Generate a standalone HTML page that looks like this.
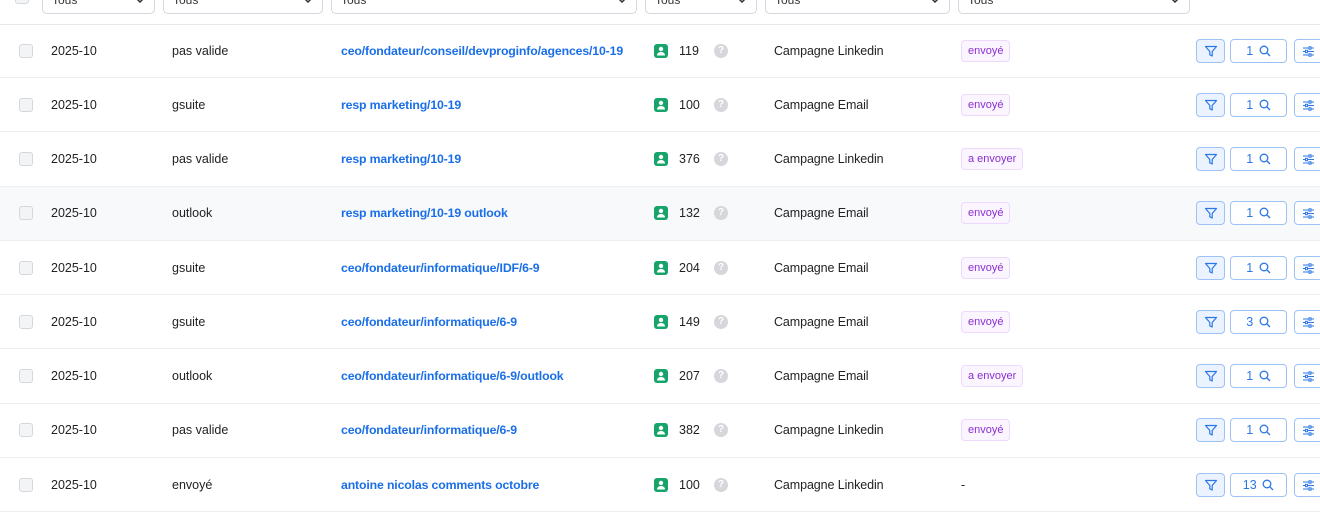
<!DOCTYPE html>
<html><head><meta charset="utf-8"><style>
*{box-sizing:border-box;margin:0;padding:0}
body{width:1320px;height:526px;overflow:hidden;background:#fff;font-family:"Liberation Sans",Arial,sans-serif;font-size:12.5px;color:#222;position:relative}
.sel{position:absolute;top:-10px;height:24px;border:1px solid #d5d8de;border-radius:5px;background:#fff}
.sel span{position:absolute;left:9px;top:2px;font-size:12px;color:#333}
.sel svg{position:absolute;right:9px;top:6px}
.hl{position:absolute;left:0;right:0;top:24px;height:1px;background:#e6e8ec}
.row{position:absolute;left:0;width:1320px;height:54px;border-bottom:1px solid #eceef1}
.row.g{background:#f8f9fb}
.row>*{position:absolute;top:50%;transform:translateY(-50%)}
.cb{left:19px;width:14px;height:14px;border:1px solid #d4d7dc;border-radius:3px;background:#f3f4f6}
.d{left:51px}.t{left:172px}
.n{left:341px;color:#1a6fe8;font-weight:bold;font-size:12.3px;letter-spacing:-0.15px}
.ic{left:654px;width:14px;height:14px;border-radius:3px;background:#16a46a}
.num{left:679px}
.q{left:714px;width:14px;height:14px;border-radius:50%;background:#d5d7db;color:#fff;font-size:10px;font-weight:bold;text-align:center;line-height:14px}
.c{left:774px;letter-spacing:-0.1px}
.b{left:961px;height:22px;padding:0 6px;border:1px solid #ecd9fb;background:#fbf5ff;border-radius:4px;color:#8a2fd1;font-size:11px;line-height:20px}
.dash{left:961px}
.bf{left:1196px;width:29px;height:24px;border:1px solid #9dc3f5;background:#eaf3ff;border-radius:4px}
.bc{left:1230px;width:57px;height:24px;border:1px solid #9dc3f5;background:#fff;border-radius:4px;color:#2c77e6;font-size:12.5px;text-align:center;line-height:22px}
.bs{left:1294px;width:30px;height:24px;border:1px solid #9dc3f5;background:#fff;border-radius:4px}
.bf svg,.bs svg{position:absolute;left:7px;top:5px}
.bc svg{vertical-align:-2px;margin-left:2px}
</style></head><body>
<div style="position:absolute;left:15px;top:-10px;width:14px;height:14px;border:1px solid #d4d7dc;border-radius:3px;background:#f3f4f6"></div>
<div class="sel" style="left:42px;width:113px"><span>Tous</span><svg width="10" height="6" viewBox="0 0 10 6"><path d="M1 1l4 4 4-4" fill="none" stroke="#333" stroke-width="1.5"/></svg></div>
<div class="sel" style="left:163px;width:160px"><span>Tous</span><svg width="10" height="6" viewBox="0 0 10 6"><path d="M1 1l4 4 4-4" fill="none" stroke="#333" stroke-width="1.5"/></svg></div>
<div class="sel" style="left:331px;width:306px"><span>Tous</span><svg width="10" height="6" viewBox="0 0 10 6"><path d="M1 1l4 4 4-4" fill="none" stroke="#333" stroke-width="1.5"/></svg></div>
<div class="sel" style="left:645px;width:112px"><span>Tous</span><svg width="10" height="6" viewBox="0 0 10 6"><path d="M1 1l4 4 4-4" fill="none" stroke="#333" stroke-width="1.5"/></svg></div>
<div class="sel" style="left:765px;width:185px"><span>Tous</span><svg width="10" height="6" viewBox="0 0 10 6"><path d="M1 1l4 4 4-4" fill="none" stroke="#333" stroke-width="1.5"/></svg></div>
<div class="sel" style="left:958px;width:232px"><span>Tous</span><svg width="10" height="6" viewBox="0 0 10 6"><path d="M1 1l4 4 4-4" fill="none" stroke="#333" stroke-width="1.5"/></svg></div>
<div class="hl"></div>
<div id="rows"></div>
<script>
var D=[["pas valide","ceo/fondateur/conseil/devproginfo/agences/10-19","119","Campagne Linkedin","envoyé","1"],
["gsuite","resp marketing/10-19","100","Campagne Email","envoyé","1"],
["pas valide","resp marketing/10-19","376","Campagne Linkedin","a envoyer","1"],
["outlook","resp marketing/10-19 outlook","132","Campagne Email","envoyé","1"],
["gsuite","ceo/fondateur/informatique/IDF/6-9","204","Campagne Email","envoyé","1"],
["gsuite","ceo/fondateur/informatique/6-9","149","Campagne Email","envoyé","3"],
["outlook","ceo/fondateur/informatique/6-9/outlook","207","Campagne Email","a envoyer","1"],
["pas valide","ceo/fondateur/informatique/6-9","382","Campagne Linkedin","envoyé","1"],
["envoyé","antoine nicolas comments octobre","100","Campagne Linkedin","","13"]];
var h="";
var person='<svg width="14" height="14" viewBox="0 0 14 14" style="position:absolute;left:0;top:0"><circle cx="7" cy="5" r="2.2" fill="#fff"/><path d="M3 11.5c0-2.2 1.8-3.5 4-3.5s4 1.3 4 3.5z" fill="#fff"/></svg>';
D.forEach(function(r,i){
var top=24+i*54.25;
h+='<div class="row'+(i==3?' g':'')+'" style="top:'+top+'px"><div class="cb"></div><div class="d">2025-10</div><div class="t">'+r[0]+'</div><div class="n">'+r[1]+'</div><div class="ic">'+person+'</div><div class="num">'+r[2]+'</div><div class="q">?</div><div class="c">'+r[3]+'</div>'+(r[4]?'<div class="b">'+r[4]+'</div>':'<div class="dash">-</div>')+
'<div class="bf"><svg width="14" height="13" viewBox="0 0 14 13"><path d="M1.5 1.5h11l-4.3 5v4.5l-2.4-1.2V6.5z" fill="none" stroke="#2c77e6" stroke-width="1.2" stroke-linejoin="round"/></svg></div>'+
'<div class="bc">'+r[5]+' <svg width="12" height="12" viewBox="0 0 12 12"><circle cx="5" cy="5" r="3.8" fill="none" stroke="#2c77e6" stroke-width="1.3"/><path d="M8 8l3 3" stroke="#2c77e6" stroke-width="1.3"/></svg></div>'+
'<div class="bs"><svg width="13" height="13" viewBox="0 0 13 13"><path d="M1 3h11M1 6.5h11M1 10h11" stroke="#2c77e6" stroke-width="1.1"/><rect x="7" y="1.8" width="2" height="2.4" fill="#fff" stroke="#2c77e6"/><rect x="3.5" y="5.3" width="2" height="2.4" fill="#fff" stroke="#2c77e6"/><rect x="7" y="8.8" width="2" height="2.4" fill="#fff" stroke="#2c77e6"/></svg></div></div>';
});
document.getElementById("rows").innerHTML=h;
</script>
</body></html>
